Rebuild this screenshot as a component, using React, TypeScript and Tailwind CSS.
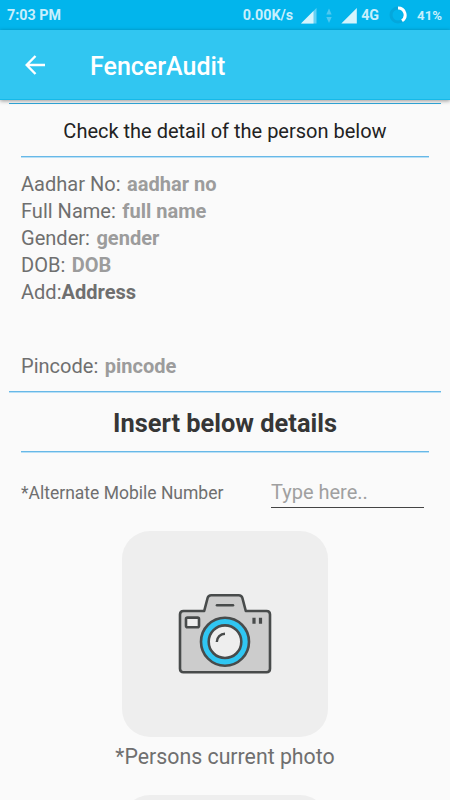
import { useState } from 'react';

interface DetailRowProps {
  label: string;
  value: string;
}

function DetailRow({ label, value }: DetailRowProps) {
  return (
    <div className="flex h-[27px] items-center gap-[6.5px] pt-px text-[20.05px] text-[#6f6f6f]">
      <span>{label}</span>
      <span className="font-bold text-[#9c9c9c]">{value}</span>
    </div>
  );
}

function StatusBar() {
  return (
    <div className="flex h-[30px] shrink-0 items-center bg-[#02b5ec] pl-[7px] pr-2 pt-px text-[14.3px] font-bold text-[#c8effc]">
      <span>7:03 PM</span>
      <span className="ml-auto">0.00K/s</span>
      <svg className="ml-2 h-[16px] w-[16px]" viewBox="0 0 16 16">
        <path d="M0 15.5 L15.5 0 V15.5 Z" fill="#64d1f4" />
        <path d="M0 15.5 L12.5 3 V15.5 Z" fill="#d5f4fd" />
      </svg>
      <svg className="ml-[9px] h-[16px] w-[6px]" viewBox="0 0 6 16" fill="#4fc9f0">
        <path d="M3 0.5 L5.7 6.5 H0.3 Z" />
        <path d="M0.3 9 H5.7 L3 15 Z" />
      </svg>
      <svg className="ml-[9px] h-[16px] w-[16px]" viewBox="0 0 16 16">
        <path d="M0.3 15.5 L15.8 0 V15.5 Z" fill="#d5f4fd" />
      </svg>
      <span className="ml-1">4G</span>
      <svg className="-mt-px ml-[10px] h-[18px] w-[18px]" viewBox="0 0 18 18" fill="none" strokeWidth="3">
        <circle cx="9" cy="9" r="7" stroke="#04a7dc" />
        <path d="M9 2 A7 7 0 0 1 13 14.8" stroke="#ffffff" />
      </svg>
      <span className="ml-[10px] text-[13.2px]">41%</span>
    </div>
  );
}

function CameraIcon() {
  return (
    <svg className="h-[82px] w-[96px]" viewBox="0 0 96 82" fill="none" stroke="#484b4b" strokeWidth="2.6" strokeLinecap="round" strokeLinejoin="round">
      <path
        d="M6.5 18 H27.2 L30.6 5 Q31.4 2.3 34.2 2.3 H61.8 Q64.6 2.3 65.4 5 L68.8 18 H89.5 Q93 18 93 21.5 V75.8 Q93 79.3 89.5 79.3 H6.5 Q3 79.3 3 75.8 V21.5 Q3 18 6.5 18 Z"
        fill="#cccccc"
      />
      <path d="M40 12.2 H56" strokeWidth="2.6" />
      <rect x="9" y="24.6" width="13" height="9.6" rx="1.5" fill="#eeeeee" strokeWidth="2.6" />
      <path d="M77 24.7 V30.7 M83.5 24.7 V30.7" strokeWidth="3.2" strokeLinecap="butt" />
      <circle cx="48" cy="48.7" r="24" fill="#30c6f2" />
      <circle cx="48" cy="48.7" r="16.3" fill="#eeeeee" />
      <path d="M39.8 49 A8.3 8.3 0 0 1 48 40.7" strokeWidth="2.4" strokeLinecap="butt" />
    </svg>
  );
}

export default function App() {
  const [mobile, setMobile] = useState('');

  return (
    <div className="flex h-[800px] w-[450px] flex-col overflow-hidden bg-[#fafafa] font-[Roboto,sans-serif] leading-none">
      <StatusBar />
      <header className="z-10 flex h-[70px] shrink-0 items-center border-b border-[#16b9e8] bg-[#31c6f1] pl-[25px] text-white shadow-[0_1px_4px_rgba(0,0,0,0.4)]">
        <svg className="h-[20px] w-[20px]" viewBox="0 0 20 20" fill="none" stroke="currentColor" strokeWidth="2.4">
          <path d="M20 10 H2 M10.5 1 L1.7 10 L10.5 19" />
        </svg>
        <h1 className="ml-[45px] pt-[4px] text-[25px] font-medium">FencerAudit</h1>
      </header>

      <main className="flex shrink-0 flex-col px-[9px] pt-[3px]">
        <div className="h-px bg-[#31a9db]" />
        <div className="flex h-[52px] items-center justify-center pt-[1px] text-[20px] text-[#222222]">
          Check the detail of the person below
        </div>
        <div className="mx-3 h-[2px] border-t border-[#67b8e7] bg-[#b9e0f6]" />

        <section className="px-3 pt-[12px]">
          <DetailRow label="Aadhar No:" value="aadhar no" />
          <DetailRow label="Full Name:" value="full name" />
          <DetailRow label="Gender:" value="gender" />
          <DetailRow label="DOB:" value="DOB" />
          <div className="flex h-[74px] pt-[4px] text-[20.05px] text-[#6f6f6f]">
            <span>Add:</span>
            <span className="font-bold">Address</span>
          </div>
          <DetailRow label="Pincode:" value="pincode" />
        </section>

        <div className="mt-[12px] h-[2px] border-t border-[#67b8e7] bg-[#b9e0f6]" />
        <h2 className="flex h-[58px] items-center justify-center pt-[3px] text-[25.4px] font-bold text-[#363636]">
          Insert below details
        </h2>
        <div className="mx-3 h-[2px] border-t border-[#67b8e7] bg-[#b9e0f6]" />

        <div className="mt-[23px] flex h-[32px] items-center justify-between pl-3 pr-[17px]">
          <label htmlFor="mobile" className="pt-[3px] text-[17.5px] text-[#6f6f6f]">*Alternate Mobile Number</label>
          <input
            id="mobile"
            type="tel"
            value={mobile}
            onChange={(e) => setMobile(e.target.value)}
            placeholder="Type here.."
            className="h-[31px] w-[153px] border-b border-[#444444] text-[20px] text-[#333333] outline-none placeholder:text-[#a0a0a0]"
          />
        </div>

        <div className="mt-[23px] flex flex-col items-center">
          <button type="button" className="flex h-[206px] w-[206px] items-center justify-center rounded-[28px] bg-[#eeeeee]">
            <CameraIcon />
          </button>
          <p className="flex h-[58px] items-start pt-[9px] text-[21.3px] text-[#6f6f6f]">*Persons current photo</p>
          <button type="button" className="h-[206px] w-[206px] rounded-[28px] bg-[#eeeeee]" />
        </div>
      </main>
    </div>
  );
}
